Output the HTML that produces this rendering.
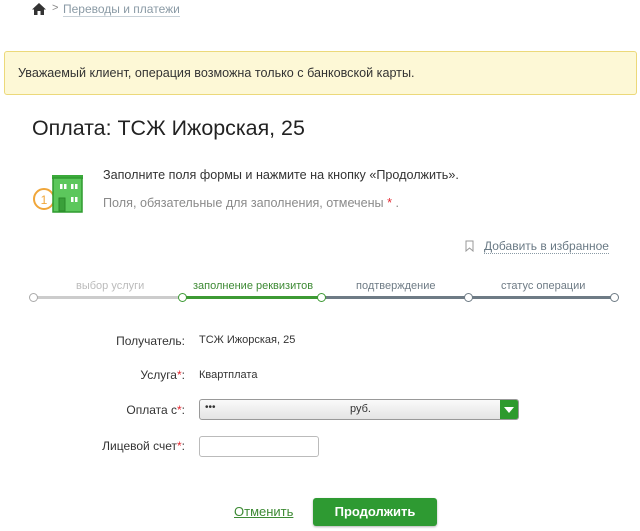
<!DOCTYPE html>
<html><head><meta charset="utf-8"><style>
*{margin:0;padding:0;box-sizing:border-box}
body{width:640px;height:531px;background:#fff;font-family:"Liberation Sans",sans-serif;position:relative;overflow:hidden;color:#333}
.a{position:absolute;white-space:nowrap}
.lbl{position:absolute;right:455px;font-size:12px;color:#333}
.st{color:#e3262f}
</style></head><body>
<svg class="a" style="left:32px;top:3px" width="14" height="12" viewBox="0 0 14 12"><path d="M7 0L0 6.5h2V12h3.5V8h3v4H12V6.5h2z" fill="#333"/></svg>
<div class="a" style="left:52px;top:2px;font-size:11px;color:#888">&gt;</div>
<div class="a" style="left:63px;top:2px;font-size:12px;color:#8a9aa5;border-bottom:1px solid #c7d0d6">Переводы и платежи</div>
<div class="a" style="left:4px;top:51px;width:633px;height:44px;background:#fdf8d6;border:1px solid #ecd97a;border-radius:3px"></div>
<div class="a" style="left:18px;top:66px;font-size:12.6px;color:#333">Уважаемый клиент, операция возможна только с банковской карты.</div>
<div class="a" style="left:32px;top:116px;font-size:21.4px;color:#222">Оплата: ТСЖ Ижорская, 25</div>
<svg class="a" style="left:32px;top:174px" width="52" height="40" viewBox="0 0 52 40">
<circle cx="12" cy="25" r="10" fill="#fff" stroke="#f0a63a" stroke-width="2"/>
<text x="12" y="30" font-size="12" text-anchor="middle" fill="#f0a63a" font-family="Liberation Sans">1</text>
<rect x="20" y="1" width="31" height="4" fill="#3aaa3a"/>
<rect x="21" y="4" width="29" height="34" fill="#5cc75c" stroke="#2f9b2f" stroke-width="1.5"/>
<rect x="28" y="10" width="2.5" height="5" fill="#fff"/><rect x="32" y="10" width="2.5" height="5" fill="#fff"/>
<rect x="39" y="10" width="2.5" height="5" fill="#fff"/><rect x="43" y="10" width="2.5" height="5" fill="#fff"/>
<rect x="27" y="24" width="6" height="13" fill="#3aa03a" stroke="#2a8a2a"/>
<rect x="39" y="23" width="2.5" height="5" fill="#fff"/><rect x="43" y="23" width="2.5" height="5" fill="#fff"/>
</svg>
<div class="a" style="left:103px;top:168px;font-size:12.6px;color:#333">Заполните поля формы и нажмите на кнопку «Продолжить».</div>
<div class="a" style="left:103px;top:196px;font-size:12.6px;color:#8a8a8a">Поля, обязательные для заполнения, отмечены <span class="st">*</span> .</div>
<svg class="a" style="left:465px;top:240px" width="9" height="12" viewBox="0 0 9 12"><path d="M1 1h7v10L4.5 8 1 11z" fill="none" stroke="#999"/></svg>
<div class="a" style="left:484px;top:239px;font-size:12px;color:#6a7a85;border-bottom:1px dotted #8a9aa5">Добавить в избранное</div>
<div class="a" style="left:35px;top:296px;width:146px;height:3px;background:#ccc"></div>
<div class="a" style="left:184px;top:296px;width:136px;height:3px;background:#3d9a34"></div>
<div class="a" style="left:323px;top:296px;width:290px;height:3px;background:#6e7b85"></div>
<div class="a" style="left:29px;top:293px;width:9px;height:9px;border-radius:50%;border:1.5px solid #aaa;background:#fff"></div>
<div class="a" style="left:178px;top:293px;width:9px;height:9px;border-radius:50%;border:1.5px solid #3d9a34;background:#fff"></div>
<div class="a" style="left:317px;top:293px;width:9px;height:9px;border-radius:50%;border:1.5px solid #3d9a34;background:#fff"></div>
<div class="a" style="left:464px;top:293px;width:9px;height:9px;border-radius:50%;border:1.5px solid #6e7b85;background:#fff"></div>
<div class="a" style="left:610px;top:293px;width:9px;height:9px;border-radius:50%;border:1.5px solid #6e7b85;background:#fff"></div>
<div class="a" style="left:76px;top:280px;font-size:11px;color:#bbb">выбор услуги</div>
<div class="a" style="left:193px;top:280px;font-size:11px;color:#3d8a34">заполнение реквизитов</div>
<div class="a" style="left:356px;top:280px;font-size:11px;color:#6e7b85">подтверждение</div>
<div class="a" style="left:501px;top:280px;font-size:11px;color:#6e7b85">статус операции</div>
<div class="lbl" style="top:334px">Получатель:</div>
<div class="a" style="left:199px;top:334px;font-size:11px;color:#333">ТСЖ Ижорская, 25</div>
<div class="lbl" style="top:368px">Услуга<span class="st">*</span>:</div>
<div class="a" style="left:199px;top:369px;font-size:11px;color:#333">Квартплата</div>
<div class="lbl" style="top:403px">Оплата с<span class="st">*</span>:</div>
<div class="a" style="left:199px;top:399px;width:320px;height:21px;border:1px solid #999;border-radius:3px;background:linear-gradient(#fafafa,#e4e4e4);overflow:hidden">
<span class="a" style="left:5px;top:2px;font-size:10px">•••</span>
<span class="a" style="left:150px;top:3px;font-size:11px;color:#333">руб.</span>
<span class="a" style="right:0;top:0;width:18px;height:19px;background:#2d9a2d"></span>
<svg class="a" style="right:4px;top:7px" width="10" height="6"><path d="M0 0h10L5 6z" fill="#fff"/></svg></div>
<div class="lbl" style="top:439px">Лицевой счет<span class="st">*</span>:</div>
<div class="a" style="left:199px;top:436px;width:120px;height:21px;border:1px solid #bbb;border-radius:3px"></div>
<div class="a" style="left:234px;top:504px;font-size:13px;color:#3d8a34;text-decoration:underline">Отменить</div>
<div class="a" style="left:313px;top:498px;width:124px;height:28px;border-radius:3px;background:#2e9a32;color:#fff;font-size:13px;font-weight:bold;text-align:center;line-height:28px;box-shadow:0 1px 2px rgba(0,0,0,.3)">Продолжить</div>
</body></html>
